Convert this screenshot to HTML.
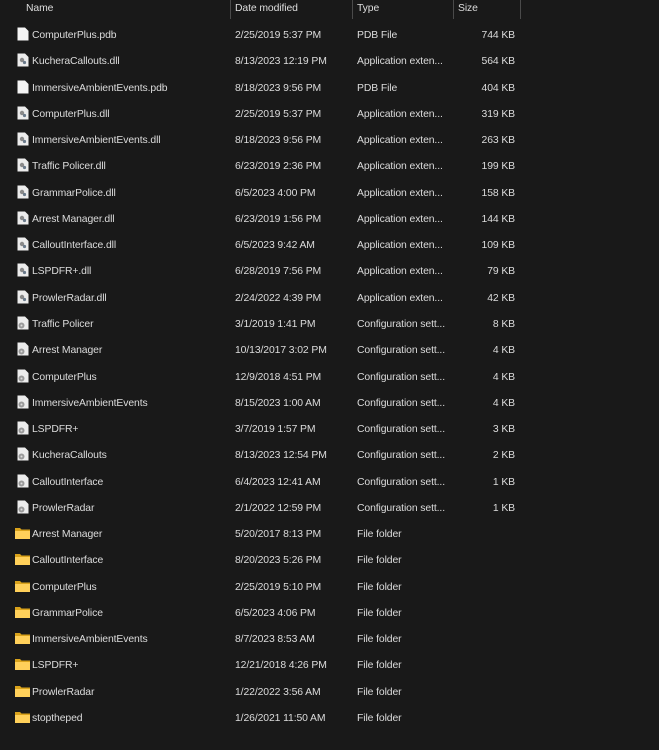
<!DOCTYPE html>
<html><head><meta charset="utf-8"><style>
*{margin:0;padding:0;box-sizing:border-box}
body{width:659px;height:750px;background:#191919;color:#dcdcdc;font-family:"Liberation Sans",sans-serif;font-size:10.4px;letter-spacing:-0.1px;position:relative;overflow:hidden}
.h{position:absolute;top:3px;color:#dedede}
.sep{position:absolute;top:0;width:1px;height:19px;background:#4a4a4a}
.r{position:absolute;left:0;width:659px;height:26px}
.r span{position:absolute;top:1px;line-height:26px;white-space:nowrap}
.n{left:32px}.d{left:235px}.t{left:357px}.s{right:144px}
.ic{position:absolute;left:17px;top:5px}
</style></head><body>
<div class="h" style="left:26px">Name</div>
<div class="sep" style="left:230px"></div><div class="h" style="left:235px">Date modified</div>
<div class="sep" style="left:352px"></div><div class="h" style="left:357px">Type</div>
<div class="sep" style="left:453px"></div><div class="h" style="left:458px">Size</div>
<div class="sep" style="left:520px"></div>
<div id="rows"></div>
<script>
var d=[
["p","ComputerPlus.pdb","2/25/2019 5:37 PM","PDB File","744 KB"],
["d","KucheraCallouts.dll","8/13/2023 12:19 PM","Application exten...","564 KB"],
["p","ImmersiveAmbientEvents.pdb","8/18/2023 9:56 PM","PDB File","404 KB"],
["d","ComputerPlus.dll","2/25/2019 5:37 PM","Application exten...","319 KB"],
["d","ImmersiveAmbientEvents.dll","8/18/2023 9:56 PM","Application exten...","263 KB"],
["d","Traffic Policer.dll","6/23/2019 2:36 PM","Application exten...","199 KB"],
["d","GrammarPolice.dll","6/5/2023 4:00 PM","Application exten...","158 KB"],
["d","Arrest Manager.dll","6/23/2019 1:56 PM","Application exten...","144 KB"],
["d","CalloutInterface.dll","6/5/2023 9:42 AM","Application exten...","109 KB"],
["d","LSPDFR+.dll","6/28/2019 7:56 PM","Application exten...","79 KB"],
["d","ProwlerRadar.dll","2/24/2022 4:39 PM","Application exten...","42 KB"],
["c","Traffic Policer","3/1/2019 1:41 PM","Configuration sett...","8 KB"],
["c","Arrest Manager","10/13/2017 3:02 PM","Configuration sett...","4 KB"],
["c","ComputerPlus","12/9/2018 4:51 PM","Configuration sett...","4 KB"],
["c","ImmersiveAmbientEvents","8/15/2023 1:00 AM","Configuration sett...","4 KB"],
["c","LSPDFR+","3/7/2019 1:57 PM","Configuration sett...","3 KB"],
["c","KucheraCallouts","8/13/2023 12:54 PM","Configuration sett...","2 KB"],
["c","CalloutInterface","6/4/2023 12:41 AM","Configuration sett...","1 KB"],
["c","ProwlerRadar","2/1/2022 12:59 PM","Configuration sett...","1 KB"],
["f","Arrest Manager","5/20/2017 8:13 PM","File folder",""],
["f","CalloutInterface","8/20/2023 5:26 PM","File folder",""],
["f","ComputerPlus","2/25/2019 5:10 PM","File folder",""],
["f","GrammarPolice","6/5/2023 4:06 PM","File folder",""],
["f","ImmersiveAmbientEvents","8/7/2023 8:53 AM","File folder",""],
["f","LSPDFR+","12/21/2018 4:26 PM","File folder",""],
["f","ProwlerRadar","1/22/2022 3:56 AM","File folder",""],
["f","stoptheped","1/26/2021 11:50 AM","File folder",""]];
var ic={
p:'<svg class="ic" width="12" height="14"><path d="M0.5 0.5H8L11.5 4V13.5H0.5Z" fill="#f4f4f4"/></svg>',
d:'<svg class="ic" width="12" height="14"><path d="M0.5 0.5H8L11.5 4V13.5H0.5Z" fill="#ececec"/><circle cx="5" cy="7" r="2.2" fill="#8a8a8a"/><circle cx="7.5" cy="9.5" r="1.6" fill="#6a7a8a"/></svg>',
c:'<svg class="ic" width="12" height="14"><path d="M0.5 0.5H8L11.5 4V13.5H0.5Z" fill="#ececec"/><circle cx="4.5" cy="9.5" r="3" fill="#9a9a9a"/><circle cx="4.5" cy="9.5" r="1" fill="#ddd"/></svg>',
f:'<svg class="ic" width="15" height="13" style="left:15px;top:6px"><path d="M0 1H5L6.5 2.5H15V12H0Z" fill="#d9a21b"/><path d="M0 4H15V12H0Z" fill="#ffd05a"/></svg>'};
var h='';
for(var i=0;i<d.length;i++){var r=d[i];var y=22+i*26.27;
h+='<div class="r" style="top:'+y+'px">'+ic[r[0]]+'<span class="n">'+r[1]+'</span><span class="d">'+r[2]+'</span><span class="t">'+r[3]+'</span><span class="s">'+r[4]+'</span></div>';}
document.getElementById('rows').innerHTML=h;
</script>
</body></html>
